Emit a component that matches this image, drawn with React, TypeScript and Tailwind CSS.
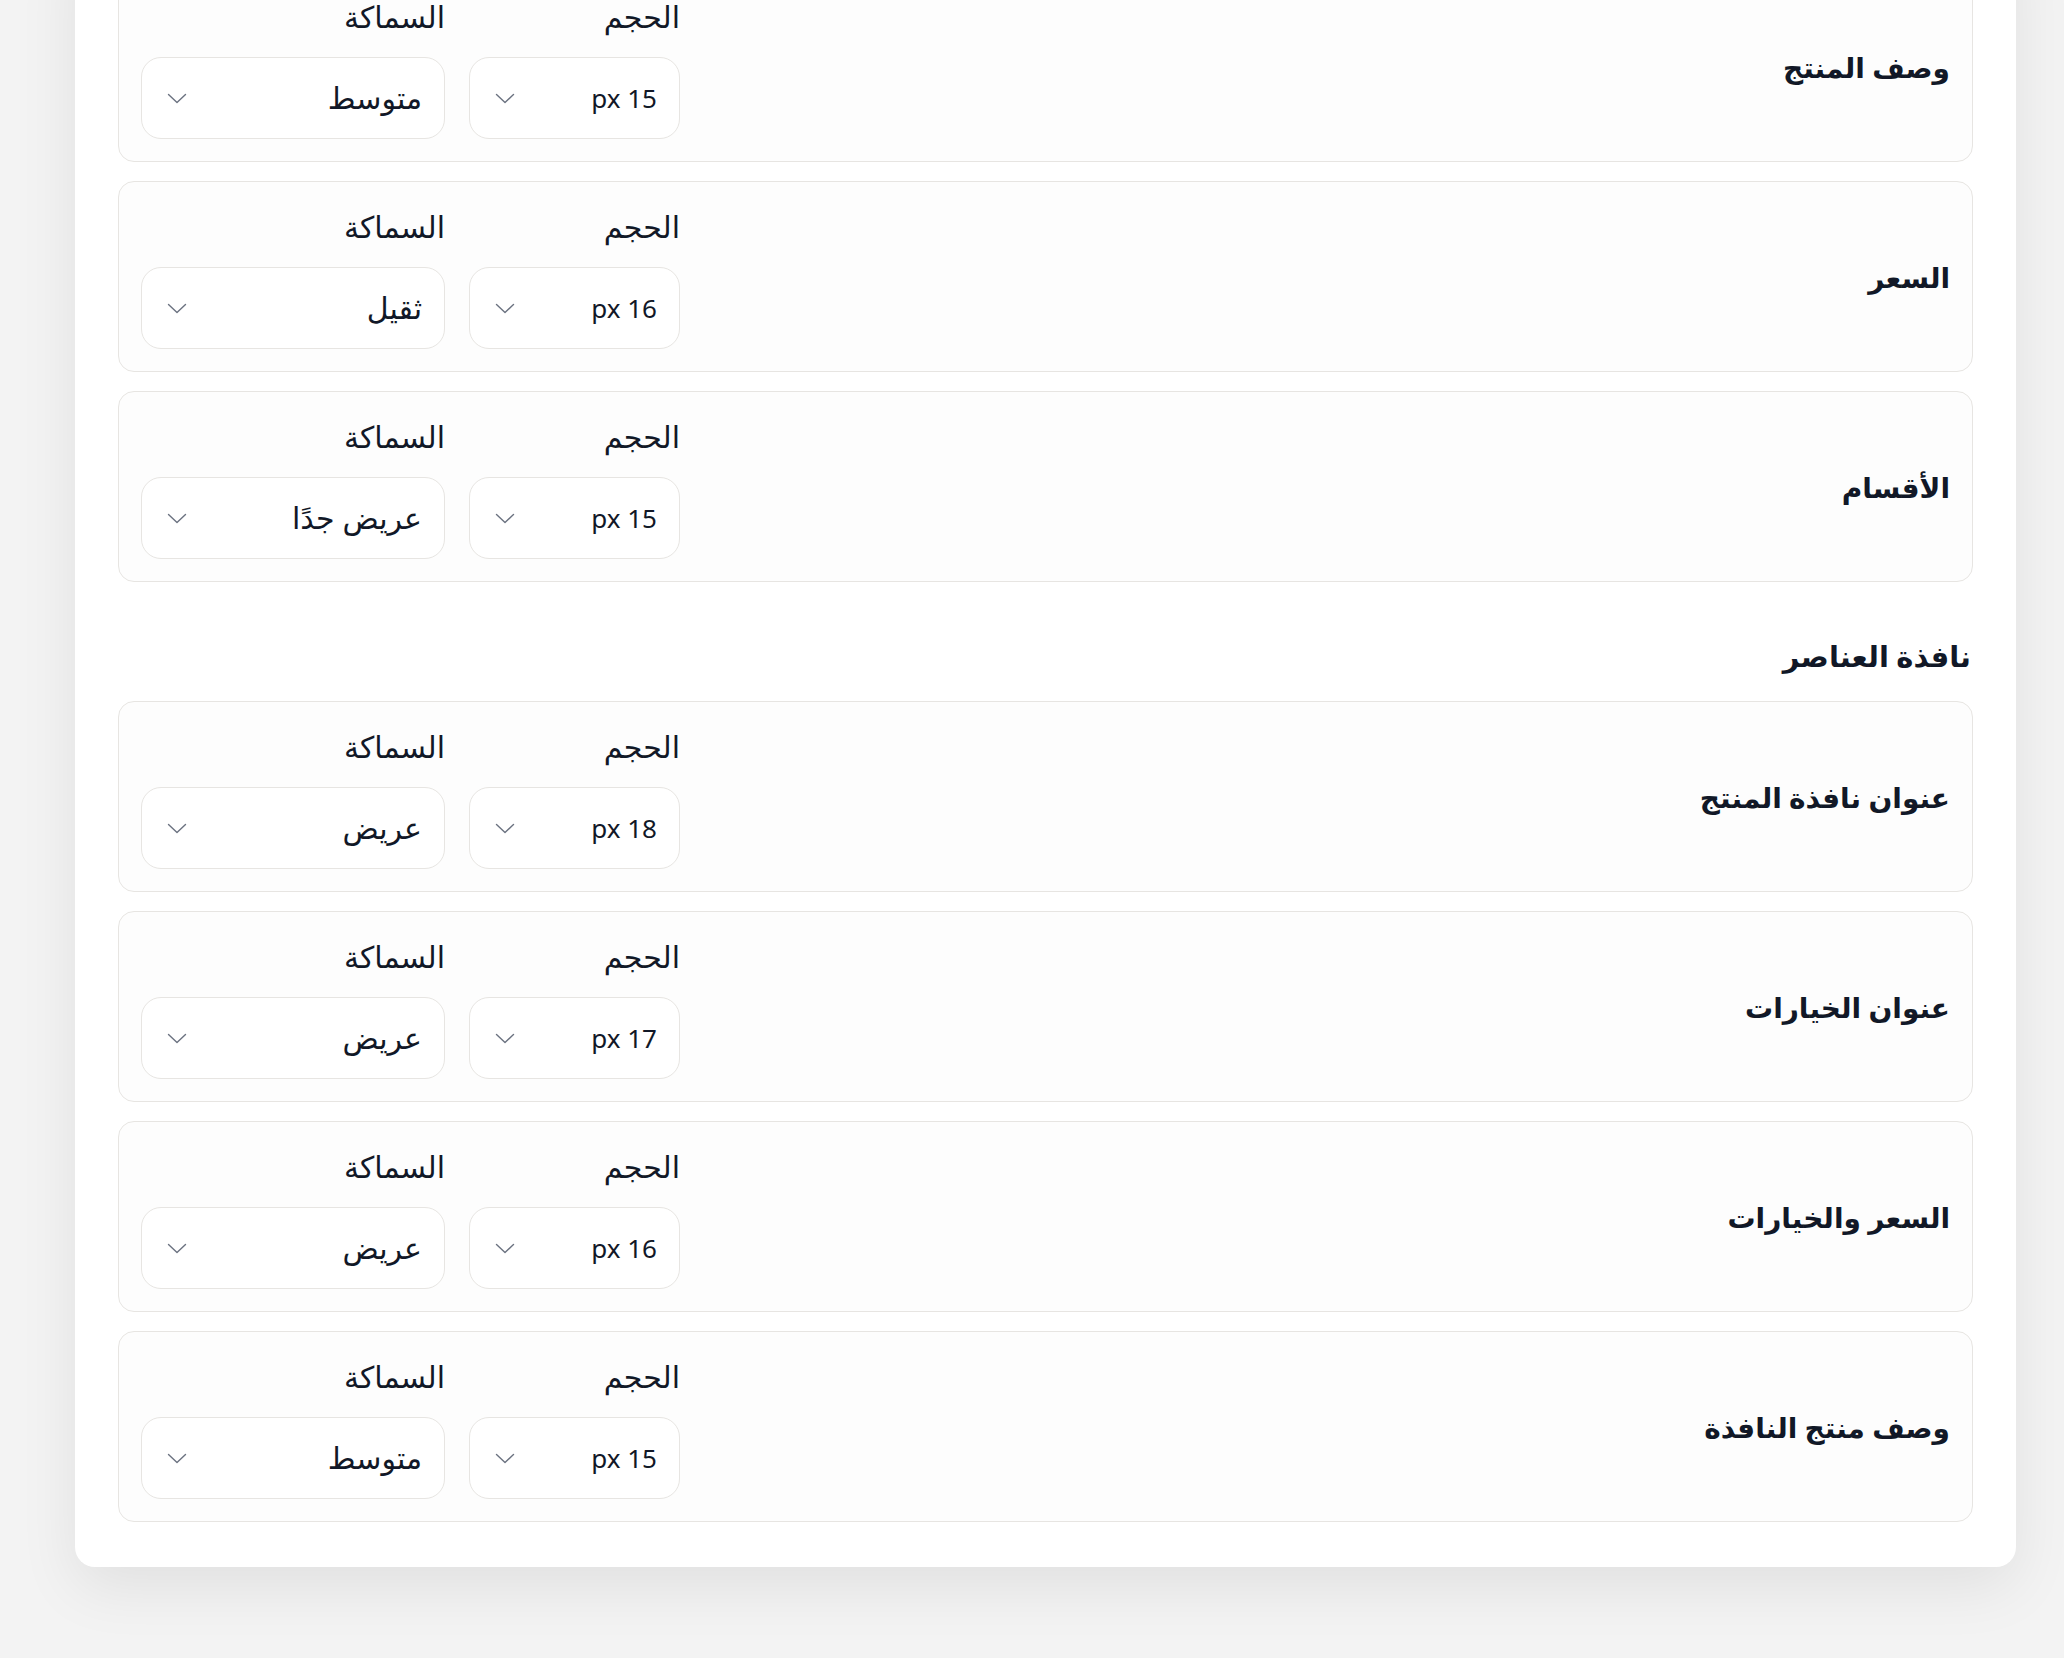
import { Fragment } from "react";

type FontRow = {
    title: string
    size: number
    weight: string
}

const productRows: FontRow[] = [
    { title: "وصف المنتج", size: 15, weight: "متوسط" },
    { title: "السعر", size: 16, weight: "ثقيل" },
    { title: "الأقسام", size: 15, weight: "عريض جدًا" },
]

const popupRows: FontRow[] = [
    { title: "عنوان نافذة المنتج", size: 18, weight: "عريض" },
    { title: "عنوان الخيارات", size: 17, weight: "عريض" },
    { title: "السعر والخيارات", size: 16, weight: "عريض" },
    { title: "وصف منتج النافذة", size: 15, weight: "متوسط" },
]

const font = { fontFamily: '"Noto Sans", "DejaVu Sans", sans-serif' }

function Chevron() {
    return (
        <svg width="20" height="11" viewBox="0 0 20 11" fill="none" className="shrink-0">
            <path d="M1.5 1.5l8.5 8 8.5-8" stroke="#6b7280" strokeWidth="1.4" strokeLinecap="round" strokeLinejoin="round" />
        </svg>
    )
}

function SelectBox({ value, width, textSize }: { value: string, width: string, textSize: string }) {
    return (
        <div className={`${width} h-[82px] flex items-center justify-between rounded-[20px] border border-[#e7e5e2] bg-white pr-[22px] pl-[25px]`}>
            <span className={`${textSize} text-[#111827] leading-none`}>{value}</span>
            <Chevron />
        </div>
    )
}

function Field({ label, children }: { label: string, children: React.ReactNode }) {
    return (
        <div className="flex flex-col">
            <span className="text-[30px] leading-[46px] text-[#111827] mb-[17px]">{label}</span>
            {children}
        </div>
    )
}

function RowCard({ row }: { row: FontRow }) {
    return (
        <div className="flex items-center justify-between rounded-[16px] border border-[#e7e5e2] bg-[#fdfdfd] p-[22px]">
            <h3 className="text-[28px] font-bold text-[#111827]">{row.title}</h3>
            <div className="flex gap-[24px]">
                <Field label="الحجم">
                    <SelectBox value={`${row.size} px`} width="w-[211px]" textSize="text-[26px]" />
                </Field>
                <Field label="السماكة">
                    <SelectBox value={row.weight} width="w-[304px]" textSize="text-[30px]" />
                </Field>
            </div>
        </div>
    )
}

export default function App() {
    return (
        <div dir="rtl" style={font} className="h-[1658px] overflow-hidden bg-[#f3f3f3] pl-[75px] pr-[48px]">
            <div className="-mt-[72px] rounded-[20px] bg-white px-[43px] pt-[43px] pb-[45px] shadow-[0_20px_60px_rgba(0,0,0,0.08)]">
                <div className="flex flex-col gap-[19px]">
                    {productRows.map(row => (
                        <RowCard key={row.title} row={row} />
                    ))}
                </div>

                <h2 className="mt-[56px] mb-[27px] pr-[2px] text-[29px] leading-[36px] font-bold text-[#111827]">نافذة العناصر</h2>

                <div className="flex flex-col gap-[19px]">
                    {popupRows.map(row => (
                        <Fragment key={row.title}>
                            <RowCard row={row} />
                        </Fragment>
                    ))}
                </div>
            </div>
        </div>
    )
}
